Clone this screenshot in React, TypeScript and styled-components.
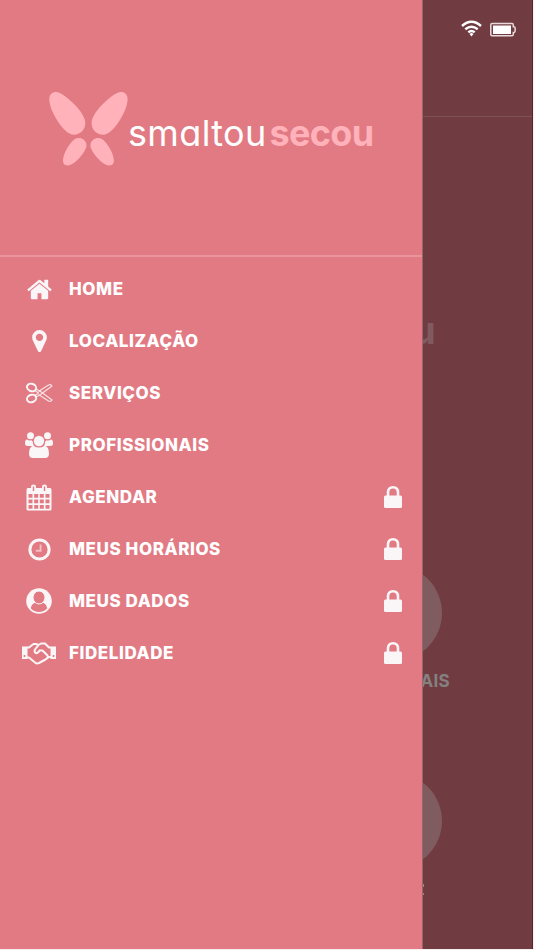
import React from "react";
import styled, { createGlobalStyle } from "styled-components";

const GlobalStyle = createGlobalStyle`
  * { box-sizing: border-box; }
  body { margin: 0; background: #f5eef0; font-family: Inter, "Liberation Sans", sans-serif; overflow: hidden; }
`;

const Screen = styled.div`
  display: flex;
  width: 533px;
  height: 949px;
  overflow: hidden;
  background: #703c42;
  border-right: 1px solid #5c252d;
`;

const Drawer = styled.nav`
  flex: 0 0 422px;
  height: 949px;
  background: #e27a84;
`;

const Brand = styled.header`
  display: flex;
  height: 257px;
  padding: 90px 0 0 48px;
  border-bottom: 2px solid #e9939c;
`;

const Butterfly = styled.svg`
  flex: none;
  width: 81px;
  height: 78px;
  fill: #ffb2ba;
`;

const Wordmark = styled.div`
  display: flex;
  align-items: baseline;
  padding-top: 21px;
  height: 44px;
  line-height: 44px;
  font-feature-settings: "cv11";
  white-space: nowrap;
`;

const WordPart = styled.span<{ $strong?: boolean }>`
  font-size: 36px;
  font-weight: ${(p) => (p.$strong ? 700 : 400)};
  color: ${(p) => (p.$strong ? "#ffb2ba" : "#fff")};
  letter-spacing: ${(p) => (p.$strong ? -0.7 : 0.35)}px;
  margin-left: ${(p) => (p.$strong ? 3 : -1)}px;
`;

const Menu = styled.ul`
  display: flex;
  flex-direction: column;
  margin: 0;
  padding: 6px 0 0;
  list-style: none;
`;

const Item = styled.li`
  display: grid;
  grid-template-columns: 38px 1fr 20px;
  column-gap: 11px;
  align-items: center;
  height: 52px;
  padding: 0 19px 0 20px;
  color: #fff;
`;

const Label = styled.span`
  font-size: 17px;
  font-weight: 800;
  letter-spacing: 0.58px;
  line-height: 20px;
`;

const IconCell = styled.span`
  display: flex;
  justify-content: center;
  color: #faf5f6;
`;

const Glyph = styled.svg`
  display: block;
  fill: currentColor;
  overflow: visible;
`;

const Backdrop = styled.main`
  display: flex;
  flex-direction: column;
  flex: 1;
  height: 949px;
  overflow: hidden;
  border-left: 1px solid #99646a;

  > * { flex: none; }
`;

const StatusBar = styled.div`
  display: flex;
  gap: 8px;
  height: 117px;
  padding: 20px 0 0 38px;
  border-bottom: 1px solid #7d5254;
`;

const HiddenLogo = styled.div`
  height: 448px;
  padding-top: 190px;
  margin-left: -11px;
  font-size: 38px;
  line-height: 46px;
  font-weight: 700;
  color: #805a5e;
`;

const Tile = styled.div`
  height: 208px;
`;

const Disc = styled.div`
  width: 96px;
  height: 96px;
  margin-left: -77px;
  border-radius: 50%;
  background: #805b5f;
`;

const TileLabel = styled.div`
  width: 150px;
  margin: 10px 0 0 -123px;
  text-align: right;
  font-size: 17px;
  line-height: 20px;
  font-weight: 700;
  letter-spacing: 0.3px;
  color: #848180;
`;

const Speck = styled.div`
  width: 1px;
  height: 11px;
  margin-top: 15px;
  border-top: 3px solid #9b8588;
  border-bottom: 2px solid #9b8588;
`;

const HomeIcon = () => (
  <Glyph width="25" height="27" viewBox="0 0 1664 1792" preserveAspectRatio="none">
    <path d="M1408 992v480q0 26-19 45t-45 19h-384v-384h-256v384h-384q-26 0-45-19t-19-45v-480q0-1 .5-3t.5-3l575-474 575 474q1 2 1 6zm223-69l-62 74q-8 9-21 11h-3q-13 0-21-7l-692-577-692 577q-12 8-24 7-13-2-21-11l-62-74q-8-10-7-23.500t11-21.500l719-599q32-26 76-26t76 26l244 204v-195q0-14 9-23t23-9h192q14 0 23 9t9 23v408l219 182q10 8 11 21.500t-7 23.500z" />
  </Glyph>
);

const PinIcon = () => (
  <Glyph width="15" height="22" viewBox="0 128 1024 1536">
    <path d="M768 640q0-106-75-181t-181-75-181 75-75 181 75 181 181 75 181-75 75-181zm256 0q0 109-33 179l-364 774q-16 33-47.500 52t-67.500 19-67.500-19-46.500-52l-365-774q-33-70-33-179 0-212 150-362t362-150 362 150 150 362z" />
  </Glyph>
);

const ScissorsIcon = () => (
  <Glyph width="27" height="22" viewBox="0 0 27 22">
    <g fill="none" stroke="currentColor">
      <ellipse cx="5.600" cy="5.500" rx="4.700" ry="3.700" strokeWidth="2" transform="rotate(20 5.600 5.500)" />
      <ellipse cx="5.600" cy="16.500" rx="4.700" ry="3.700" strokeWidth="2" transform="rotate(-20 5.600 16.500)" />
      <path d="M9 8.500L12.500 11L9 13.500M12.500 9.500L22.500 3Q25 2 26 4L14.500 12.500L10 15M12.500 12.500L22.500 19Q25 20 26 18L14.500 9.500L10 7" strokeWidth="1.100" strokeLinejoin="round" opacity=".85" />
    </g>
  </Glyph>
);

const UsersIcon = () => (
  <Glyph width="28" height="26" viewBox="0 0 28 26">
    <circle cx="5.500" cy="3.700" r="3.500" />
    <circle cx="22.500" cy="3.700" r="3.500" />
    <path d="M2 7.500Q4 8.800 6.500 8.200Q8 9 8 11Q8 13.500 9.500 14H3Q0 14 0 11.500Q0 7.500 2 7.500ZM26 7.500Q24 8.800 21.500 8.200Q20 9 20 11Q20 13.500 18.500 14H25Q28 14 28 11.500Q28 7.500 26 7.500Z" />
    <circle cx="14" cy="9" r="5.200" />
    <path d="M8.500 13.700Q14 17.500 19.500 13.700Q24 14.500 24 21.500Q24 26 20 26H8Q4 26 4 21.500Q4 14.500 8.500 13.700Z" />
  </Glyph>
);

const CalendarIcon = () => (
  <Glyph width="26" height="27" viewBox="0 0 26 27">
    <path fillRule="evenodd" d="M2 4H5V2.500Q5 .5 7.500 .5Q10 .5 10 2.500V4H16V2.500Q16 .5 18.500 .5Q21 .5 21 2.500V4H24Q25.500 4 25.500 6V25Q25.500 26.500 24 26.500H2Q.5 26.500 .5 25V6Q.5 4 2 4ZM6.800 2.500V7H8.200V2.500ZM17.800 2.500V7H19.200V2.500ZM2.500 10H6.500V13.800H2.500ZM8.200 10H12.200V13.800H8.200ZM13.800 10H17.800V13.800H13.800ZM19.500 10H23.500V13.800H19.500ZM2.500 15.500H6.500V19.300H2.500ZM8.200 15.500H12.200V19.300H8.200ZM13.800 15.500H17.800V19.300H13.800ZM19.500 15.500H23.500V19.300H19.500ZM2.500 21H6.500V24.800H2.500ZM8.200 21H12.200V24.800H8.200ZM13.800 21H17.800V24.800H13.800ZM19.500 21H23.500V24.800H19.500Z" />
  </Glyph>
);

const ClockIcon = () => (
  <Glyph width="23" height="23" viewBox="0 0 23 23">
    <circle cx="11.500" cy="11.500" r="9.600" fill="none" stroke="currentColor" strokeWidth="3" />
    <path d="M12.600 6.500V12.700H7.800" fill="none" stroke="#f2bfc4" strokeWidth="1.900" />
  </Glyph>
);

const UserIcon = () => (
  <Glyph width="26" height="26" viewBox="0 0 26 26">
    <circle cx="13" cy="13" r="12.800" />
    <path d="M9.500 14.600C6 16 5.400 18 4.800 20.200Q8 24 13 24Q18 24 21.200 20.200C20.600 18 20 16 16.500 14.600Q13 17 9.500 14.600Z" fill="#e27a84" />
    <ellipse cx="13" cy="9.500" rx="6" ry="6.500" fill="#e27a84" stroke="currentColor" strokeWidth="1" />
  </Glyph>
);

const HandshakeIcon = () => (
  <Glyph width="34" height="23" viewBox="0 0 34 23">
    <path fillRule="evenodd" d="M0 4.500H5.500V17H0ZM1.700 13V15H3.300V13ZM34 4.500H28.500V17H34ZM30.700 13V15H32.300V13Z" />
    <path d="M5 5.500H7L11.500 2H14L16.500 3L19 1.500H23L27 5.500H29M5 15.500H7L13 20.500Q15 22.200 17 21L23.500 17.500L27 15H29M16.500 3L13 7.500Q11.800 10 14 11Q16 11.700 17.500 8.500H20.500L25.500 13.500Q26.500 15.500 24.500 16.500" fill="none" stroke="currentColor" strokeWidth="2" strokeLinejoin="round" />
  </Glyph>
);

const LockIcon = () => (
  <Glyph width="18" height="22" viewBox="0 0 18 22">
    <path d="M4 10V6.500Q4 1.300 9 1.300T14 6.500V10" fill="none" stroke="currentColor" strokeWidth="2.600" />
    <rect y="9.500" width="18" height="12.500" rx="1.500" />
  </Glyph>
);

const WifiIcon = () => (
  <Glyph width="21" height="17" viewBox="0 0 21 17">
    <g fill="none" stroke="#fff" strokeWidth="2.400">
      <path d="M1 6Q10.500 -2.300 20 6" />
      <path d="M4.300 9.300Q10.500 4.200 16.700 9.300" />
      <path d="M7.300 12.200Q10.500 9.700 13.700 12.200" />
    </g>
    <path d="M8.500 14L10.500 12.700L12.500 14L10.500 16.500Z" fill="#fff" />
  </Glyph>
);

const BatteryIcon = () => (
  <Glyph width="26" height="17" viewBox="0 0 26 17">
    <path d="M2 3.500H22Q23.300 3.500 23.300 5V6.800H24Q25.200 6.800 25.200 9.500Q25.200 12.500 24 12.500H23.300V14.300Q23.300 15.800 22 15.800H2Q.8 15.800 .8 14.300V5Q.8 3.500 2 3.500Z" fill="none" stroke="#e8dadb" strokeWidth="1.500" />
    <path d="M3 5.500H21V14H3Z" fill="#fff" />
  </Glyph>
);

const Wings = () => (
  <>
    <path d="M1.300 9C1.300 4 5 1.700 8 2C13 2 21 9 27 15C33 21 37.300 28 37.300 33C37.300 40 32 44.700 26 44.700C20 44.700 14 38 9 30C4.500 23 1.300 15 1.300 9Z" />
    <path d="M15 71C14.700 64 22 52 27 49C31 46.500 38.500 49 38.500 55.500C38.500 61 27 75.300 20 75.500C17 75.500 15 74 15 71Z" />
  </>
);

const items: { label: string; Icon: React.FC; locked?: boolean }[] = [
  { label: "HOME", Icon: HomeIcon },
  { label: "LOCALIZAÇÃO", Icon: PinIcon },
  { label: "SERVIÇOS", Icon: ScissorsIcon },
  { label: "PROFISSIONAIS", Icon: UsersIcon },
  { label: "AGENDAR", Icon: CalendarIcon, locked: true },
  { label: "MEUS HORÁRIOS", Icon: ClockIcon, locked: true },
  { label: "MEUS DADOS", Icon: UserIcon, locked: true },
  { label: "FIDELIDADE", Icon: HandshakeIcon, locked: true },
];

export default function App() {
  return (
    <>
      <GlobalStyle />
      <Screen>
        <Drawer>
          <Brand>
            <Butterfly viewBox="0 0 81 78">
              <Wings />
              <g transform="matrix(-1 0 0 1 80.900 0)">
                <Wings />
              </g>
            </Butterfly>
            <Wordmark>
              <WordPart>smaltou</WordPart>
              <WordPart $strong>secou</WordPart>
            </Wordmark>
          </Brand>
          <Menu>
            {items.map(({ label, Icon, locked }) => (
              <Item key={label}>
                <IconCell><Icon /></IconCell>
                <Label>{label}</Label>
                {locked && <IconCell><LockIcon /></IconCell>}
              </Item>
            ))}
          </Menu>
        </Drawer>
        <Backdrop>
          <StatusBar>
            <WifiIcon />
            <BatteryIcon />
          </StatusBar>
          <HiddenLogo>u</HiddenLogo>
          <Tile>
            <Disc />
            <TileLabel>PROFISSIONAIS</TileLabel>
          </Tile>
          <Tile>
            <Disc />
            <Speck />
          </Tile>
        </Backdrop>
      </Screen>
    </>
  );
}
